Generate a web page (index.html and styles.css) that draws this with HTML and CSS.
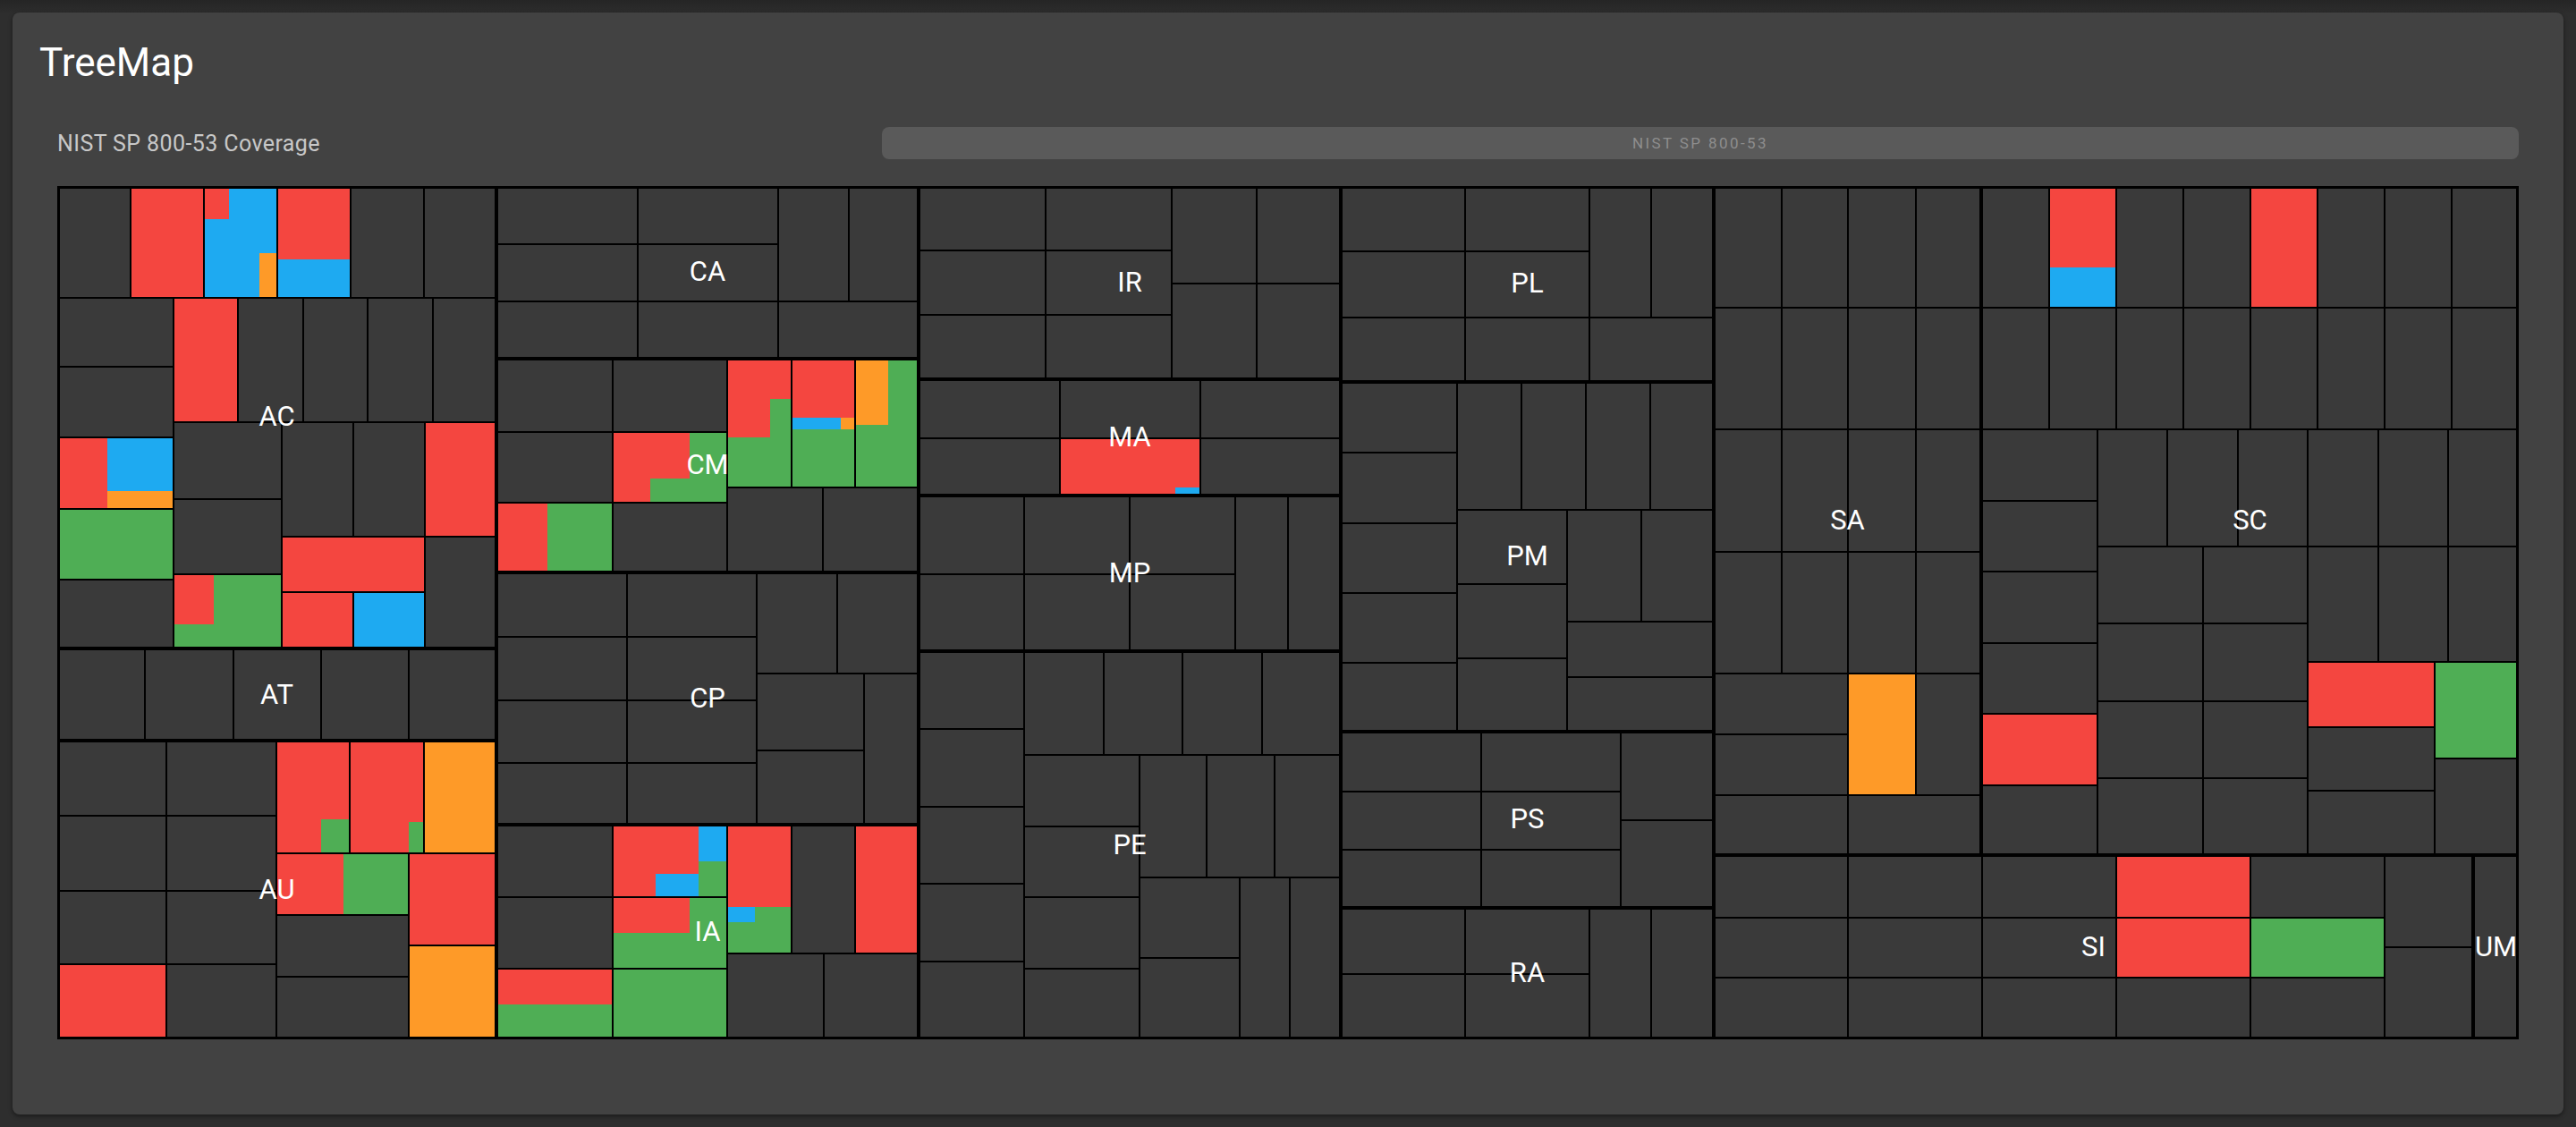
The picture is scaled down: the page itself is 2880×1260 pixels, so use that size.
FILE: index.html
```html
<!DOCTYPE html>
<html lang="en">
<head>
<meta charset="utf-8">
<title>TreeMap</title>
<link rel="stylesheet" href="styles.css">
</head>
<body>
<div class="card">
  <h1 class="title">TreeMap</h1>
  <div class="chart">
    <div class="chart-head">
      <div class="subtitle">NIST SP 800-53 Coverage</div>
      <div class="crumb">NIST SP 800-53</div>
    </div>
    <svg id="tm" class="treemap" viewBox="64 208 2752 954" width="2752" height="954" xmlns="http://www.w3.org/2000/svg"></svg>
  </div>
</div>
<script src="script.js"></script>
</body>
</html>
```

FILE: styles.css
```css
html, body {
  margin: 0;
}
body {
  width: 2880px;
  height: 1260px;
  box-sizing: border-box;
  padding: 14px;
  overflow: hidden;
  background: linear-gradient(#252525, #2e2e2e 16px, #2e2e2e);
  font-family: Roboto, "Liberation Sans", sans-serif;
}
.card {
  width: 2852px;
  height: 1232px;
  box-sizing: border-box;
  padding: 30px;
  background: #424242;
  border-radius: 8px;
  box-shadow: 0 2px 5px rgba(0, 0, 0, 0.45);
}
.title {
  margin: 0;
  font-size: 44px;
  line-height: 52px;
  font-weight: 400;
  color: #ffffff;
}
.chart {
  padding: 0 20px;
}
.chart-head {
  display: flex;
  align-items: center;
  height: 36px;
  margin-top: 46px;
}
.subtitle {
  width: 922px;
  font-size: 25px;
  letter-spacing: 0.4px;
  color: #c8c8c8;
}
.crumb {
  flex: 1;
  height: 36px;
  display: flex;
  align-items: center;
  justify-content: center;
  background: #5a5a5a;
  border-radius: 8px;
  font-size: 17px;
  letter-spacing: 2.4px;
  color: #8e8e8e;
}
.treemap {
  display: block;
  margin-top: 30px;
}
.bg { fill: #000000; }
.cell { fill: #3a3a3a; }
.r { fill: #f44640; }
.b { fill: #1eaaf1; }
.o { fill: #fe9a28; }
.g { fill: #4fae55; }
.line { fill: none; stroke: #000000; stroke-width: 2; }
.grp { fill: none; stroke: #000000; stroke-width: 4; }
.outer { fill: none; stroke: #000000; stroke-width: 6; }
.lbl {
  fill: #ffffff;
  font-family: Roboto, "Liberation Sans", sans-serif;
  font-size: 31px;
  text-anchor: middle;
  dominant-baseline: central;
}
```

FILE: script.js
```js
(function () {
  var NS = 'http://www.w3.org/2000/svg';
  var svg = document.getElementById('tm');
  var C = [];
  function G(xs, ys) {
    for (var i = 0; i < xs.length - 1; i++)
      for (var j = 0; j < ys.length - 1; j++)
        C.push([xs[i], ys[j], xs[i + 1], ys[j + 1]]);
  }
  // AC
  G([64,146,228,310,392,474,555],[208,333]);
  G([64,194],[333,410,489,569,648,725]);
  G([194,266,339,411,484,555],[333,472]);
  G([194,315],[472,558,642,725]);
  G([315,395,475],[472,600]);
  G([315,475],[600,662]);
  G([315,395,475],[662,725]);
  G([475,555],[472,600,725]);
  // AT
  G([64,162,261,359,457,555],[725,828]);
  // AU
  G([64,186,309],[828,912,996,1078,1162]);
  G([309,391,474,555],[828,954]);
  G([309,457],[954,1023,1092,1162]);
  G([457,555],[954,1057,1162]);
  // CA
  G([555,713,870],[208,273,337,401]);
  G([870,949,1027],[208,337]);
  G([870,1027],[337,401]);
  // CM
  G([555,685,813],[401,483,562,640]);
  G([813,885,956,1027],[401,545]);
  G([813,920,1027],[545,640]);
  // CP
  G([555,701,846],[640,712,783,853,922]);
  G([846,936,1027],[640,753]);
  G([846,966],[753,839,922]);
  G([966,1027],[753,922]);
  // IA
  G([555,685,813],[922,1003,1083,1162]);
  G([813,885,956,1027],[922,1066]);
  G([813,921,1027],[1066,1162]);
  // IR
  G([1027,1169,1310],[208,280,352,424]);
  G([1310,1405,1499],[208,317,424]);
  // MA
  G([1027,1185,1342,1499],[424,490,554]);
  // MP
  G([1027,1145,1263,1381],[554,642,728]);
  G([1381,1440,1499],[554,728]);
  // PE
  G([1027,1145],[728,815,902,988,1075,1162]);
  G([1145,1234,1322,1411,1499],[728,844]);
  G([1145,1274],[844,924,1003,1083,1162]);
  G([1274,1349,1425,1499],[844,981]);
  G([1274,1386],[981,1071,1162]);
  G([1386,1442,1499],[981,1162]);
  // PL
  G([1499,1638,1777],[208,281,355,427]);
  G([1777,1846,1916],[208,355]);
  G([1777,1916],[355,427]);
  // PM
  G([1499,1629],[427,506,585,663,741,818]);
  G([1629,1701,1773,1845,1916],[427,570]);
  G([1629,1752],[570,653,736,818]);
  G([1752,1835,1916],[570,695]);
  G([1752,1916],[695,757,818]);
  // PS
  G([1499,1656,1812],[818,885,950,1015]);
  G([1812,1916],[818,917,1015]);
  // RA
  G([1499,1638,1777],[1015,1089,1162]);
  G([1777,1846,1916],[1015,1162]);
  // SA
  G([1916,1992,2066,2142,2215],[208,344,480,617,753]);
  G([1916,2066],[753,821,889,956]);
  G([2066,2142,2215],[753,889]);
  G([2066,2215],[889,956]);
  // SC
  G([2215,2291,2366,2441,2516,2591,2666,2741,2816],[208,344,480]);
  G([2215,2345],[480,560,639,719,798,878,956]);
  G([2345,2423,2502,2580],[480,611]);
  G([2345,2463,2580],[611,697,784,870,956]);
  G([2580,2659,2737,2816],[480,611,740]);
  G([2580,2722],[740,813,884,956]);
  G([2722,2816],[740,848,956]);
  // SI
  G([1916,2066,2216,2366,2516,2666],[956,1026,1093,1162]);
  G([2666,2765],[956,1059,1162]);
  // UM
  G([2765,2816],[956,1162]);

  var P = [
    ['r',146,208,228,333],
    ['b',228,208,310,333],['r',228,208,256,245],['o',290,283,310,333],
    ['r',310,208,392,290],['b',310,290,392,333],
    ['r',194,333,266,472],
    ['r',64,489,120,569],['b',120,489,194,549],['o',120,549,194,569],
    ['g',64,569,194,648],
    ['g',194,642,315,725],['r',194,642,239,698],
    ['r',315,600,475,662],
    ['r',315,662,395,725],['b',395,662,475,725],
    ['r',475,472,555,600],
    ['r',64,1078,186,1162],
    ['r',309,828,391,954],['g',359,916,391,954],
    ['r',391,828,474,954],['g',457,919,474,954],
    ['o',474,828,555,954],
    ['r',309,954,384,1023],['g',384,954,457,1023],
    ['r',457,954,555,1057],['o',457,1057,555,1162],
    ['r',555,562,612,640],['g',612,562,685,640],
    ['r',685,483,813,562],['g',771,483,813,562],['g',727,535,771,562],
    ['r',813,401,885,545],['g',861,446,885,489],['g',813,489,885,545],
    ['g',885,401,956,545],['r',885,401,956,467],['b',885,467,940,480],['o',940,467,956,480],
    ['g',956,401,1027,545],['o',956,401,993,475],
    ['r',555,1083,685,1123],['g',555,1123,685,1162],
    ['r',685,922,813,1003],['b',781,922,813,963],['g',781,963,813,1003],['b',733,977,781,1003],
    ['g',685,1003,813,1083],['r',685,1003,771,1043],
    ['g',685,1083,813,1162],
    ['g',813,922,885,1066],['r',813,922,885,1014],['b',813,1014,844,1031],
    ['r',956,922,1027,1066],
    ['r',1185,490,1342,554],['b',1314,545,1342,554],
    ['o',2066,753,2142,889],
    ['r',2291,208,2366,299],['b',2291,299,2366,344],['r',2516,208,2591,344],
    ['r',2215,798,2345,878],
    ['r',2580,740,2722,813],['g',2722,740,2816,848],
    ['r',2366,956,2516,1026],['r',2366,1026,2516,1093],['g',2516,1026,2666,1093]
  ];

  var GR = [
    [64,208,555,725],[64,725,555,828],[64,828,555,1162],
    [555,208,1027,401],[555,401,1027,640],[555,640,1027,922],[555,922,1027,1162],
    [1027,208,1499,424],[1027,424,1499,554],[1027,554,1499,728],[1027,728,1499,1162],
    [1499,208,1916,427],[1499,427,1916,818],[1499,818,1916,1015],[1499,1015,1916,1162],
    [1916,208,2215,956],[2215,208,2816,956],[1916,956,2765,1162],[2765,956,2816,1162]
  ];

  var L = [
    ['AC',309.5,465],['AT',309.5,776],['AU',309.5,994],
    ['CA',791,303.5],['CM',791,519.5],['CP',791,780],['IA',791,1041],
    ['IR',1263,315],['MA',1263,488],['MP',1263,640],['PE',1263,944],
    ['PL',1707.5,316.5],['PM',1707.5,621.5],['PS',1707.5,915.5],['RA',1707.5,1087.5],
    ['SA',2065.5,581],['SC',2515.5,581],['SI',2340.5,1058],['UM',2790.5,1058]
  ];

  function rect(cls, x1, y1, x2, y2) {
    var r = document.createElementNS(NS, 'rect');
    r.setAttribute('class', cls);
    r.setAttribute('x', x1);
    r.setAttribute('y', y1);
    r.setAttribute('width', x2 - x1);
    r.setAttribute('height', y2 - y1);
    svg.appendChild(r);
  }

  rect('bg', 64, 208, 2816, 1162);
  C.forEach(function (c) { rect('cell', c[0], c[1], c[2], c[3]); });
  P.forEach(function (p) { rect(p[0], p[1], p[2], p[3], p[4]); });
  C.forEach(function (c) { rect('line', c[0], c[1], c[2], c[3]); });
  GR.forEach(function (g) { rect('grp', g[0], g[1], g[2], g[3]); });
  rect('outer', 64, 208, 2816, 1162);
  L.forEach(function (l) {
    var t = document.createElementNS(NS, 'text');
    t.setAttribute('class', 'lbl');
    t.setAttribute('x', l[1]);
    t.setAttribute('y', l[2]);
    t.textContent = l[0];
    svg.appendChild(t);
  });
})();
```
